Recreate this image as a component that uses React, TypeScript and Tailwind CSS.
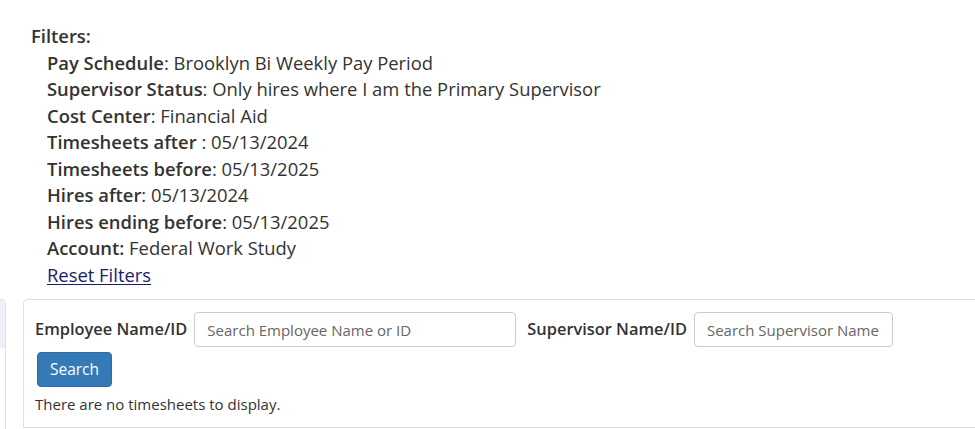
import React from 'react';

const filters: Array<{ label: string; value: string }> = [
  { label: 'Pay Schedule', value: ': Brooklyn Bi Weekly Pay Period' },
  { label: 'Supervisor Status', value: ': Only hires where I am the Primary Supervisor' },
  { label: 'Cost Center', value: ': Financial Aid' },
  { label: 'Timesheets after ', value: ': 05/13/2024' },
  { label: 'Timesheets before', value: ': 05/13/2025' },
  { label: 'Hires after', value: ': 05/13/2024' },
  { label: 'Hires ending before', value: ': 05/13/2025' },
  { label: 'Account:', value: ' Federal Work Study' },
];

export default function App() {
  return (
    <div
      className="w-[975px] h-[429px] overflow-hidden bg-white text-[#333]"
      style={{ fontFamily: '"Open Sans", "Noto Sans", sans-serif' }}
    >
      {/* Filter summary */}
      <div className="pt-[23px] pl-[31px] text-[18.4px] leading-[26.5px]">
        <div className="font-semibold">Filters:</div>
        <div className="pl-[16px]">
          {filters.map((f) => (
            <div key={f.label} className="whitespace-pre">
              <span className="font-semibold">{f.label}</span>
              {f.value}
            </div>
          ))}
          <a href="#" className="text-[#1c1c6e] underline underline-offset-2">
            Reset Filters
          </a>
        </div>
      </div>

      {/* Search panel */}
      <div className="flex mt-[11px] gap-[17px]">
        <div className="w-[6px] h-[140px] border-r border-t border-[#dde1e6] rounded-tr-[5px] flex flex-col">
          <div className="h-[48px] bg-[#eef1f7]"></div>
        </div>
        <div className="flex-1 h-[129px] border border-r-0 border-[#e0e0e0] rounded-tl-[5px] pt-[12px] pl-[11px]">
          <div className="flex items-center">
            <label className="font-semibold text-[16.4px] mr-[7px]">Employee Name/ID</label>
            <input
              className="w-[322px] h-[35px] border border-[#ccc] rounded-[4px] px-[12px] text-[15px] placeholder:text-[#666] outline-none"
              placeholder="Search Employee Name or ID"
            />
            <label className="font-semibold text-[16.4px] ml-[11px] mr-[7px]">Supervisor Name/ID</label>
            <input
              className="w-[199px] h-[35px] border border-[#ccc] rounded-[4px] px-[12px] text-[15px] placeholder:text-[#666] outline-none"
              placeholder="Search Supervisor Name"
            />
          </div>
          <button className="mt-[5px] ml-[2px] h-[35px] w-[75px] bg-[#337ab7] border border-[#2e6da4] rounded-[4px] text-white text-[15.5px]">
            Search
          </button>
          <div className="mt-[7px] text-[15px] leading-[21px]">There are no timesheets to display.</div>
        </div>
      </div>
    </div>
  );
}
